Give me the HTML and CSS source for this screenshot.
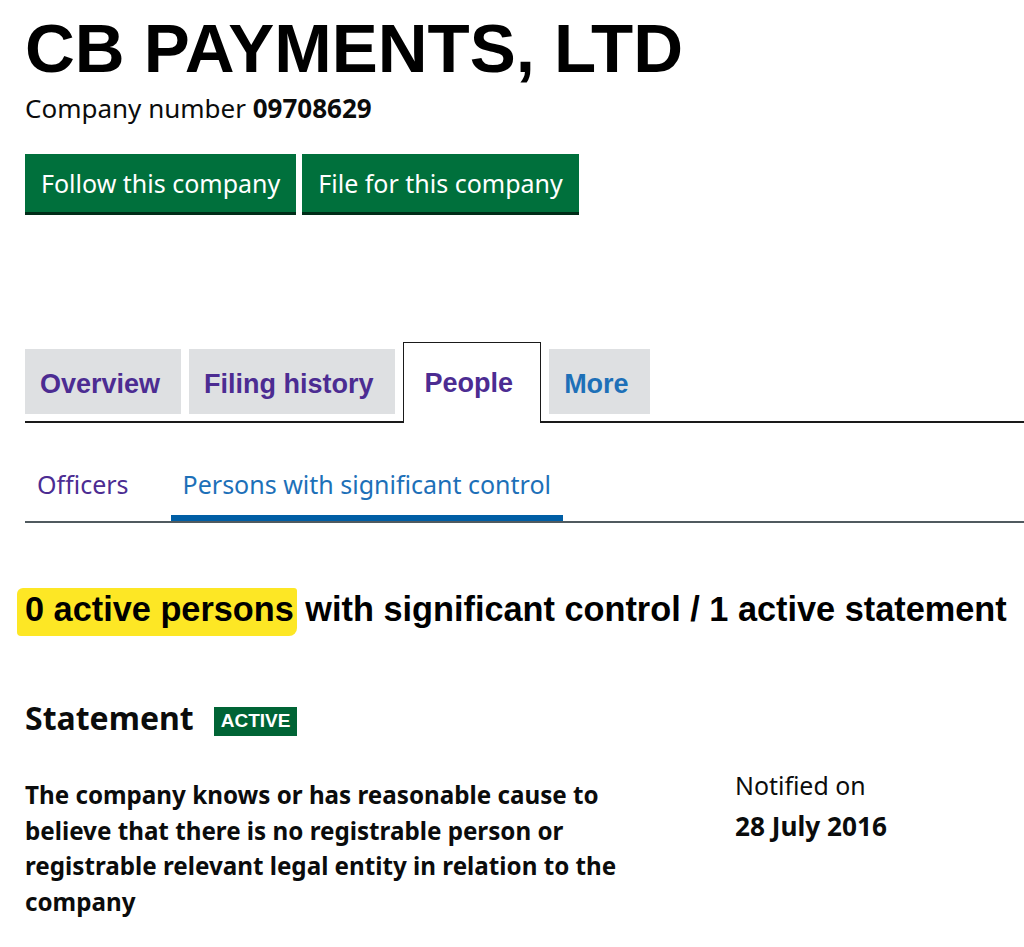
FILE: index.html
```html
<!DOCTYPE html>
<html lang="en">
<head>
<meta charset="utf-8">
<title>CB PAYMENTS, LTD - People</title>
<link rel="stylesheet" href="styles.css">
</head>
<body>
<main class="page">
  <h1 class="company-name">CB PAYMENTS, LTD</h1>
  <p class="company-number">Company number <strong>09708629</strong></p>

  <div class="actions">
    <a class="button" href="#">Follow this company</a>
    <a class="button" href="#">File for this company</a>
  </div>

  <ul class="tabs">
    <li class="tab tab-visited"><a href="#">Overview</a></li>
    <li class="tab tab-visited"><a href="#">Filing history</a></li>
    <li class="tab tab-selected"><a href="#">People</a></li>
    <li class="tab tab-link"><a href="#">More</a></li>
  </ul>

  <ul class="subnav">
    <li class="subnav-item"><a class="visited" href="#">Officers</a></li>
    <li class="subnav-item subnav-active"><a href="#">Persons with significant control</a></li>
  </ul>

  <h2 class="summary"><span class="highlight">0 active persons</span> with significant control / 1 active statement</h2>

  <div class="statement-head">
    <h3 class="statement-title">Statement</h3>
    <span class="badge">ACTIVE</span>
  </div>

  <div class="statement-body">
    <p class="statement-text">The company knows or has reasonable cause to believe that there is no registrable person or registrable relevant legal entity in relation to the company</p>
    <dl class="notified">
      <dt>Notified on</dt>
      <dd>28 July 2016</dd>
    </dl>
  </div>
</main>
</body>
</html>
```

FILE: styles.css
```css
html, body {
  margin: 0;
  padding: 0;
  background: #ffffff;
}

body {
  color: #0b0c0c;
  font-family: "Noto Sans", "Liberation Sans", Arial, sans-serif;
}

.page {
  padding: 0 0 0 25px;
}

.company-name {
  margin: 13px 0 0;
  font-family: "Liberation Sans", Arial, sans-serif;
  font-weight: 700;
  font-size: 69px;
  line-height: 72px;
  color: #000;
}

.company-number {
  margin: 8px 0 0;
  font-size: 26px;
  line-height: 30px;
}

.company-number strong {
  font-weight: 700;
}

.actions {
  display: flex;
  gap: 6px;
  margin-top: 31px;
}

.button {
  display: flex;
  align-items: center;
  box-sizing: border-box;
  height: 58px;
  padding: 0 16px;
  background: #00703c;
  box-shadow: 0 3px 0 #002d18;
  color: #ffffff;
  font-size: 25px;
  text-decoration: none;
}

.tabs {
  display: flex;
  align-items: flex-end;
  gap: 8px;
  list-style: none;
  margin: 130px 0 0;
  padding: 0;
  border-bottom: 2px solid #1a1a1a;
}

.tab a {
  display: block;
  font-family: "Liberation Sans", Arial, sans-serif;
  font-weight: 700;
  font-size: 27px;
  line-height: 31px;
  text-decoration: none;
}

.tab-visited, .tab-link {
  box-sizing: border-box;
  height: 65px;
  margin-bottom: 7px;
  padding: 20px 21px 0 15px;
  background: #dee0e2;
}

.tab-visited a {
  color: #4c2c92;
}

.tab-link a {
  color: #1d70b8;
}

.tab-selected {
  box-sizing: border-box;
  height: 81px;
  margin-bottom: -2px;
  padding: 25px 27px 0 21px;
  background: #ffffff;
  border: 1px solid #1a1a1a;
  border-bottom: none;
}

.tab-selected a {
  color: #4c2c92;
}

.subnav {
  display: flex;
  gap: 30px;
  list-style: none;
  margin: 46px 0 0;
  padding: 0;
  border-bottom: 2px solid #505a5f;
}

.subnav-item {
  padding: 0 12px 16px;
  border-bottom: 6px solid transparent;
}

.subnav-item a {
  font-size: 25px;
  line-height: 30px;
  text-decoration: none;
  color: #1d70b8;
}

.subnav-item a.visited {
  color: #4c2c92;
}

.subnav-active {
  border-bottom-color: #005ea5;
}

.summary {
  margin: 66px 0 0;
  font-family: "Liberation Sans", Arial, sans-serif;
  font-weight: 700;
  font-size: 34.3px;
  line-height: 40px;
  color: #000;
}

.highlight {
  background: #fde725;
  padding: 2px 3px 8px 8px;
  margin-left: -8px;
  margin-right: -1px;
  border-radius: 6px 3px 8px 4px;
}

.statement-head {
  display: flex;
  align-items: center;
  gap: 22px;
  margin-top: 71px;
}

.statement-title {
  margin: 0;
  font-size: 32px;
  line-height: 36px;
  font-weight: 700;
}

.badge {
  display: inline-flex;
  align-items: center;
  height: 29px;
  margin-top: 6px;
  margin-left: -2px;
  padding: 0 7px;
  background: #006435;
  color: #ffffff;
  font-family: "Liberation Sans", Arial, sans-serif;
  font-weight: 700;
  font-size: 19px;
}

.statement-body {
  display: grid;
  grid-template-columns: 710px 1fr;
  margin-top: 31px;
}

.statement-text {
  margin: 10px 0 0;
  width: 615px;
  font-size: 24.2px;
  line-height: 35.7px;
  font-weight: 700;
}

.notified {
  margin: 0;
}

.notified dt {
  font-size: 24.9px;
  line-height: 36px;
}

.notified dd {
  margin: 5px 0 0;
  font-size: 26.2px;
  line-height: 36px;
  font-weight: 700;
}
```
